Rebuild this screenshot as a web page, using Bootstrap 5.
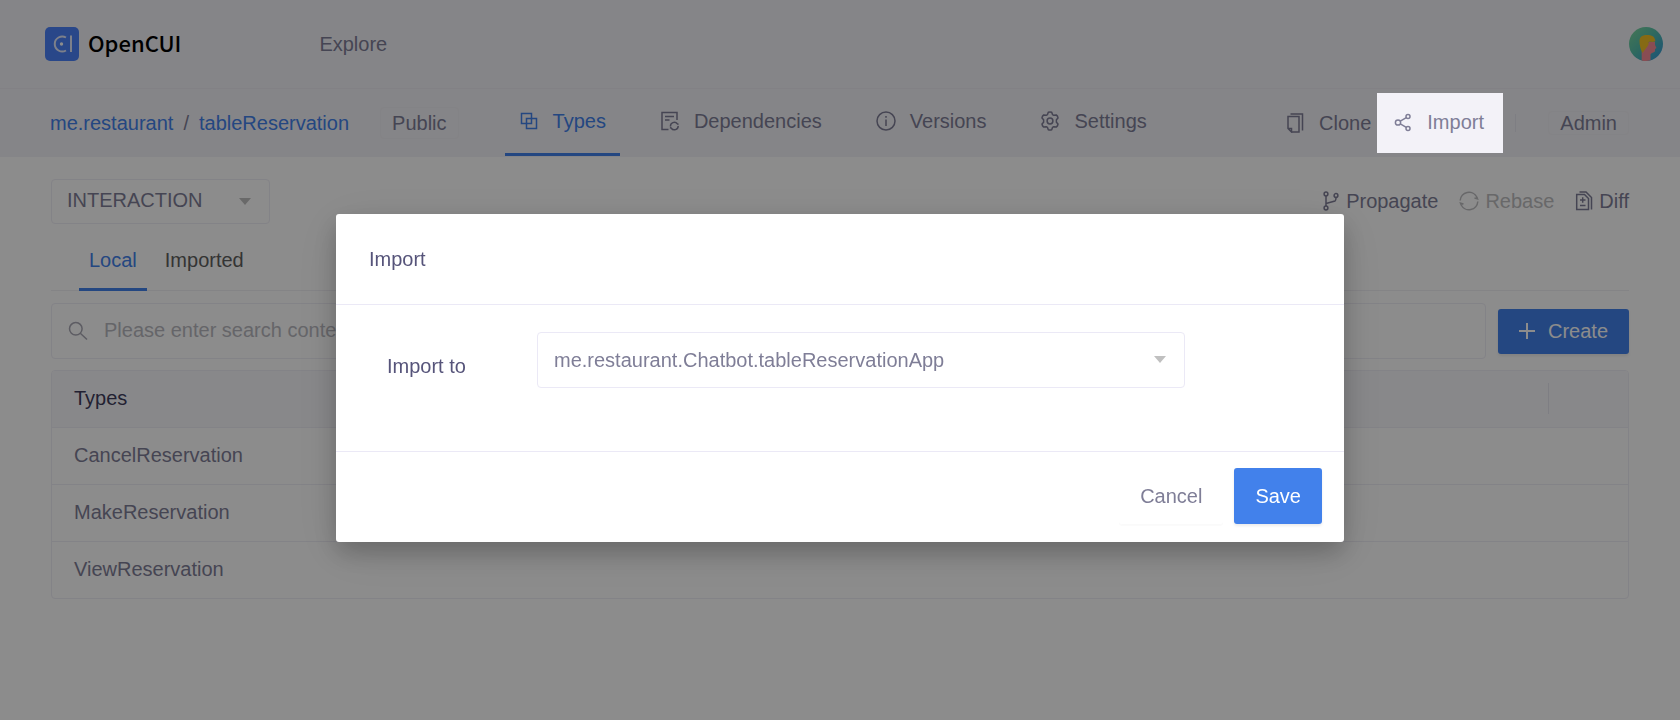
<!DOCTYPE html>
<html lang="en">
<head>
<meta charset="utf-8">
<meta name="viewport" content="width=device-width, initial-scale=1">
<title>OpenCUI - tableReservation</title>
<link href="https://cdn.jsdelivr.net/npm/bootstrap@5.3.0/dist/css/bootstrap.min.css" rel="stylesheet">
<style>
  :root { --ink: #7f7e97; --ink-dark: #56547a; --brand: #4281eb; --line: #ebe9f6; --soft-line: #efeef6; --bar: #f3f2f7; }
  body { font-family: "Liberation Sans", Arial, sans-serif; font-size: 20px; line-height: 24px; color: var(--ink); background: #fff; }
  a { text-decoration: none; color: inherit; }
  svg { display: block; flex: none; }
  .line-icon { fill: none; stroke: currentColor; stroke-width: 1.5; }
  .topbar { height: 89px; padding: 0 17px 0 45px; background: var(--bar); border-bottom: 1px solid #edecf2; }
  .brand-name { font-family: "Noto Sans CJK SC", "Noto Sans", sans-serif; font-weight: 500; font-size: 22px; color: #000; padding-bottom: 4px; }
  .brand-link { gap: 9px; }
  .explore-link { margin-left: 138px; }
  .subbar { height: 68px; padding: 0 51px 0 50px; background: var(--bar); }
  .crumbs { color: var(--ink); gap: 10px; }
  .crumbs a { color: var(--brand); }
  .tag-box { border: 1px solid #efeef4; border-radius: 4px; padding: 3px 11px; }
  .public-tag { margin-left: 31px; }
  .tag-flat { padding: 0 11px; line-height: 22px; }
  .type-tabs { gap: 26px; height: 68px; margin-left: 46px; }
  .type-tabs a { gap: 14px; padding: 0 14px; border-bottom: 3px solid transparent; height: 67px; }
  .type-tabs a.active { color: var(--brand); border-color: var(--brand); }
  .clone-link { gap: 14px; margin-right: 6px; }
  .import-btn { position: relative; z-index: 1056; gap: 14px; height: 60px; padding: 0 20px 2px 16px; width: 126px; background: #f3f2f8; border: 0; color: var(--ink); }
  .split { width: 1px; height: 18px; background: #e6e5ee; margin: 0 32px 0 12px; }
  main { padding: 22px 51px; }
  .select-plain { appearance: none; border: 1px solid var(--line); border-radius: 4px; background: #fff url("data:image/svg+xml,%3Csvg xmlns='http://www.w3.org/2000/svg' width='12' height='8'%3E%3Cpath d='M0 0h12L6 7z' fill='%23c0c0c0'/%3E%3C/svg%3E") no-repeat right 18px center; color: var(--ink); padding: 0 15px; }
  .kind-select { height: 45px; width: 219px; padding-bottom: 4px; border-color: var(--soft-line); }
  .tools { gap: 21px; padding-bottom: 2px; }
  .tools button { border: 0; padding: 0; background: none; color: var(--ink); gap: 6px; }
  .tools button:disabled { color: #bdbdc0; }
  .scope-tabs { height: 67px; padding: 0 28px; border-bottom: 1px solid #f1f0f5; gap: 8px; }
  .scope-tabs a { padding: 0 10px; color: #5f5f5f; height: 67px; border-bottom: 3px solid transparent; line-height: 72px; }
  .scope-tabs a.active { color: var(--brand); border-color: var(--brand); }
  .search-row { margin: 12px 0 11px; gap: 12px; }
  .search-box { height: 56px; border: 1px solid var(--soft-line); border-radius: 4px; padding-left: 16px; gap: 16px; color: #a9a8b4; }
  .search-box input { border: 0; outline: 0; background: none; color: var(--ink); padding: 0 0 2px; }
  .search-box input::placeholder { color: #b9b9c0; opacity: 1; }
  .btn-main { background: var(--brand); color: #fff; border: 0; border-radius: 3px; box-shadow: 0 2px 3px rgba(0,0,0,.08); font-size: 20px; }
  .create-btn { height: 45px; width: 131px; gap: 13px; padding: 0; }
  .types-box { border: 1px solid var(--soft-line); border-radius: 4px; overflow: hidden; }
  .types-table { width: 100%; table-layout: fixed; }
  .types-table th, .types-table td { height: 57px; padding: 0 22px 2px; font-weight: 400; border-top: 1px solid var(--soft-line); }
  .types-table thead th { height: 56px; background: #f8f8fc; color: #3f3d5c; border-top: 0; }
  .types-table .end-col { width: 80px; padding: 0; }
  .end-rule { width: 1px; height: 31px; background: #e6e5ee; }
  .modal-backdrop { opacity: .45; }
  .import-modal { --bs-modal-border-width: 0; }
  .import-modal .modal-dialog { max-width: 60%; margin: 214px auto 0; }
  .import-modal .modal-content { border-radius: 3px; color: var(--ink-dark); box-shadow: 0 11px 24px rgba(0,0,0,.2), 0 10px 50px rgba(0,0,0,.1); }
  .import-modal .modal-header { height: 91px; padding: 0 33px; border-bottom: 1px solid var(--line); }
  .import-modal .modal-title { font-size: 20px; font-weight: 400; line-height: 24px; }
  .import-modal .modal-body { height: 146px; padding: 27px 159px 0 51px; }
  .import-modal label { width: 150px; padding-top: 22px; }
  .import-modal .select-plain { height: 56px; padding: 0 16px; }
  .import-modal .modal-footer { height: 91px; padding: 0 22px 2px; gap: 11px; border-top: 1px solid var(--line); }
  .import-modal .modal-footer > * { margin: 0; }
  .dialog-btn { height: 56px; padding: 0 21px; font-size: 20px; border-radius: 3px; }
  .cancel-btn { background: #fff; border: 0; color: var(--ink); box-shadow: 0 2px 1px rgba(0,0,0,.02); }
</style>
<script src="https://cdn.jsdelivr.net/npm/bootstrap@5.3.0/dist/js/bootstrap.bundle.min.js"></script>
</head>
<body>
<header class="topbar d-flex align-items-center">
  <a href="#" class="brand-link d-flex align-items-center">
    <svg width="34" height="34" viewBox="0 0 34 34" fill="none"><rect width="34" height="34" rx="5" fill="#4b82fa"/><path d="M21 10.500A7.500 7.500 0 1 0 21 23.500M26 8.500V25" stroke="#e4e9fb" stroke-width="2"/><circle cx="16.500" cy="17" r="1.700" fill="#fff"/></svg>
    <span class="brand-name">OpenCUI</span>
  </a>
  <a href="#" class="explore-link">Explore</a>
  <a href="#" class="ms-auto" aria-label="Account">
    <svg width="34" height="34" viewBox="0 0 34 34">
      <defs><linearGradient id="sky" x1="0" y1="0" x2="1" y2="1"><stop offset="0" stop-color="#7fd89c"/><stop offset=".45" stop-color="#56c0ac"/><stop offset="1" stop-color="#2f94dc"/></linearGradient></defs>
      <circle cx="17" cy="17" r="17" fill="url(#sky)"/>
      <path d="M20 15H26V18L27.500 21L26 22V24C25.500 26 21.500 25.500 21.500 28V33.300A17 17 0 0 1 12.700 33.400V24Z" fill="#f88d97"/>
      <path d="M10.500 14C10.500 9.500 14 8 18 8C22.500 8 26 9.500 26.300 14C25 15.500 22 14.500 19.500 15C20.500 18 17 21 13.500 26C11.500 22.500 10.500 18 10.500 14Z" fill="#f5c225"/>
    </svg>
  </a>
</header>

<nav class="subbar d-flex align-items-center">
  <div class="crumbs d-flex"><a href="#">me.restaurant</a><span>/</span><a href="#">tableReservation</a></div>
  <span class="tag-box public-tag">Public</span>
  <div class="type-tabs d-flex">
    <a href="#" class="active d-flex align-items-center">
      <svg class="line-icon" width="20" height="20" viewBox="0 0 20 20"><path d="M2.500 2.500H12.500V12.500H2.500ZM7.500 7.500H17.500V17.500H7.500Z"/></svg>Types</a>
    <a href="#" class="d-flex align-items-center">
      <svg class="line-icon" width="20" height="20" viewBox="0 0 20 20"><path d="M8.500 18.500H2V1.500H17V9M5 5.500H14M5 9H9.500"/><path d="M10.500 15.500A3.800 3.800 0 0 1 17.300 12.800L18.500 13.500M18.200 15A3.800 3.800 0 0 1 11.300 17.200L10 16.500"/></svg>Dependencies</a>
    <a href="#" class="d-flex align-items-center">
      <svg class="line-icon" width="20" height="20" viewBox="0 0 20 20"><circle cx="10" cy="10" r="9"/><path d="M10 8.500V15M10 5V6.800"/></svg>Versions</a>
    <a href="#" class="d-flex align-items-center">
      <svg class="line-icon" width="20" height="20" viewBox="0 0 20 20"><circle cx="10" cy="10" r="2.900"/><path stroke-linejoin="round" d="M8.300 1.300Q10 .6 11.700 1.300L12.500 3.600L13.800 4.300L16.300 3.900Q17.800 5.100 18 6.900L16.400 8.800V11.200L18 13.100Q17.800 14.900 16.300 16.100L13.800 15.700L12.500 16.400L11.700 18.700Q10 19.400 8.300 18.700L7.500 16.400L6.200 15.700L3.700 16.100Q2.200 14.900 2 13.100L3.600 11.200V8.800L2 6.900Q2.200 5.100 3.700 3.900L6.200 4.300L7.500 3.600Z"/></svg>Settings</a>
  </div>
  <a href="#" class="clone-link d-flex align-items-center ms-auto">
    <svg class="line-icon" width="20" height="20" viewBox="0 0 20 20"><path d="M6.500 19H14V3.500H3V15.500L6.500 19V15.500H3M5.500 1H17.500V17.500"/></svg>Clone</a>
  <button type="button" class="import-btn d-flex align-items-center">
    <svg class="line-icon" width="20" height="20" viewBox="0 0 20 20"><circle cx="5" cy="10.500" r="2.600"/><circle cx="15" cy="4.500" r="2"/><circle cx="15" cy="16.500" r="2"/><path d="M7.300 9.200L13.300 5.600M7.300 11.900L13.300 15.400"/></svg>Import</button>
  <span class="split"></span>
  <span class="tag-box tag-flat">Admin</span>
</nav>

<main>
  <div class="d-flex justify-content-between align-items-center">
    <select class="select-plain kind-select" aria-label="Kind"><option>INTERACTION</option></select>
    <div class="tools d-flex">
      <button type="button" class="d-flex align-items-center"><svg class="line-icon" width="18" height="20" viewBox="0 0 18 20"><circle cx="4" cy="3" r="1.900"/><circle cx="4" cy="17" r="1.900"/><circle cx="14" cy="4.500" r="1.900"/><path d="M4 5V15M4 12.500L13 10Q14 9.500 14 6.500"/></svg>Propagate</button>
      <button type="button" class="d-flex align-items-center" disabled><svg class="line-icon" width="20" height="20" viewBox="0 0 20 20"><path d="M1.200 9.500A8.800 8.800 0 0 1 17.800 6L18.500 7.800L15.500 7M18.800 10.500A8.800 8.800 0 0 1 2.200 14L1.500 12.200L4.500 13"/></svg>Rebase</button>
      <button type="button" class="d-flex align-items-center"><svg class="line-icon" width="18" height="20" viewBox="0 0 18 20"><path d="M1.700 3.500H9.500L13.500 7.500V18.500H1.700ZM4.500 1H11L16.500 6.500V18.500M5 9H10.500M7.700 6.300V11.700M5 14.500H10.500"/></svg>Diff</button>
    </div>
  </div>
  <div class="scope-tabs d-flex"><a href="#" class="active">Local</a><a href="#">Imported</a></div>
  <div class="search-row d-flex align-items-center">
    <label class="search-box d-flex align-items-center flex-grow-1">
      <svg class="line-icon" width="20" height="20" viewBox="0 0 20 20"><circle cx="7.800" cy="7.800" r="6.300"/><path d="M12.300 12.300L19 18.500"/></svg>
      <input type="text" class="flex-grow-1" placeholder="Please enter search content" aria-label="Search">
    </label>
    <button type="button" class="btn-main create-btn d-flex align-items-center justify-content-center">
      <svg class="line-icon" width="16" height="16" viewBox="0 0 16 16"><path d="M8 0V16M0 8H16" stroke-width="2"/></svg>Create</button>
  </div>
  <div class="types-box">
    <table class="types-table">
      <thead><tr><th scope="col">Types</th><th class="end-col"><div class="end-rule"></div></th></tr></thead>
      <tbody>
        <tr><td>CancelReservation</td><td class="end-col"></td></tr>
        <tr><td>MakeReservation</td><td class="end-col"></td></tr>
        <tr><td>ViewReservation</td><td class="end-col"></td></tr>
      </tbody>
    </table>
  </div>
</main>

<div class="modal-backdrop"></div>
<div class="modal import-modal d-block pe-none" role="dialog" aria-labelledby="importTitle">
  <div class="modal-dialog">
    <div class="modal-content">
      <div class="modal-header"><h1 class="modal-title" id="importTitle">Import</h1></div>
      <div class="modal-body d-flex align-items-start">
        <label for="importTarget" class="flex-shrink-0">Import to</label>
        <select id="importTarget" class="select-plain flex-grow-1"><option>me.restaurant.Chatbot.tableReservationApp</option></select>
      </div>
      <div class="modal-footer">
        <button type="button" class="dialog-btn cancel-btn">Cancel</button>
        <button type="button" class="dialog-btn btn-main">Save</button>
      </div>
    </div>
  </div>
</div>
</body>
</html>
